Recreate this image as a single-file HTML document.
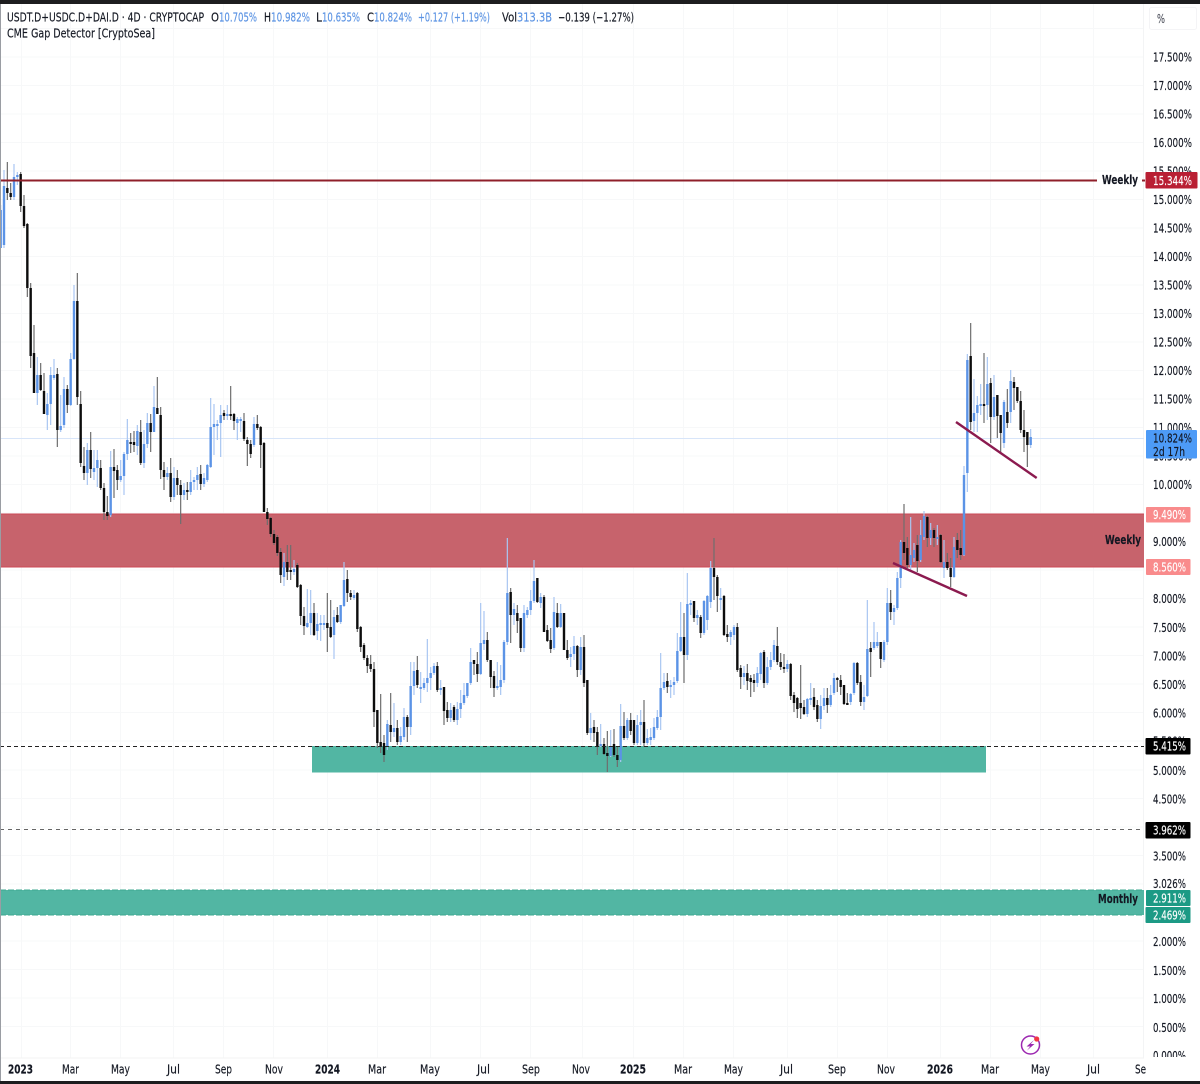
<!DOCTYPE html>
<html lang="en">
<head>
<meta charset="utf-8">
<title>USDT.D+USDC.D+DAI.D chart</title>
<style>
html,body{margin:0;padding:0;background:#fff;width:1200px;height:1084px;overflow:hidden}
svg{display:block;position:absolute;left:0;top:0;filter:blur(.3px)}
text{font-family:"DejaVu Sans","Liberation Sans",sans-serif;font-size:12px;fill:#131722;stroke:#131722;stroke-width:.15px}
.b{fill:#5b93e3;stroke:#5b93e3}
.w{fill:#fff;stroke:#fff}
.bold{font-weight:bold}
</style>
</head>
<body>
<svg id="c" width="1200" height="1084" viewBox="0 0 1200 1084" xmlns="http://www.w3.org/2000/svg">
<rect width="1200" height="1084" fill="#fff"/>
<g id="grid" stroke="#f7f8f9" stroke-width="1" fill="none">
<path d="M21.5 4V1058M70.5 4V1058M120.5 4V1058M173.5 4V1058M223.5 4V1058M273.5 4V1058M327.5 4V1058M377.5 4V1058M430.5 4V1058M480.5 4V1058M530.5 4V1058M582.5 4V1058M633.5 4V1058M683.5 4V1058M733.5 4V1058M787.5 4V1058M837.5 4V1058M887.5 4V1058M940.5 4V1058M990.5 4V1058M1040.5 4V1058M1093.5 4V1058"/>
<path d="M0 28.5H1144M0 57H1144M0 85.5H1144M0 114H1144M0 142.5H1144M0 171H1144M0 199.5H1144M0 228H1144M0 256.5H1144M0 285H1144M0 313.5H1144M0 342H1144M0 370.5H1144M0 399H1144M0 427.5H1144M0 456H1144M0 484.5H1144M0 513H1144M0 541.5H1144M0 570H1144M0 598.5H1144M0 627H1144M0 655.5H1144M0 684H1144M0 712.5H1144M0 741H1144M0 770H1144M0 798.5H1144M0 827H1144M0 855.5H1144M0 884H1144M0 912.5H1144M0 941H1144M0 969.5H1144M0 998H1144M0 1026.5H1144"/>
<path d="M0 1058H1144" stroke="#f3f3f3"/>
<path d="M1143.5 4V1058" stroke="#f3f4f5"/>
</g>
<!-- zones -->
<rect x="0" y="514" width="1144" height="53" fill="#c7636c"/>
<path d="M0 514H1144M0 567H1144" stroke="#cc4a56" stroke-width="1"/>
<rect x="312" y="746" width="674" height="26.500" fill="#52b6a3"/>
<rect x="0" y="890" width="1144" height="25" fill="#52b6a3"/>
<path d="M0 890H1144M0 915H1144" stroke="#3fa892" stroke-width="1" stroke-dasharray="6 2"/>
<!-- current price line -->
<path d="M0 438.500H1144" stroke="#d8e5f9" stroke-width="1"/>
<g id="candles"></g>
<!-- lines -->
<path d="M0 180.500H1097" stroke="#8f1f2a" stroke-width="2"/>
<path d="M1142 180.500H1145" stroke="#8f1f2a" stroke-width="2"/>
<path d="M0 746.500H1144" stroke="#222" stroke-width="1" stroke-dasharray="4 3"/>
<path d="M0 829.500H1144" stroke="#666" stroke-width="1" stroke-dasharray="4 4"/>
<path d="M956 422L1036.700 478" stroke="#8b1a4f" stroke-width="2.400"/>
<path d="M893 563L967 596" stroke="#8b1a4f" stroke-width="2.400"/>
<!-- legend -->
<text x="7" y="21.500" textLength="197" lengthAdjust="spacingAndGlyphs">USDT.D+USDC.D+DAI.D · 4D · CRYPTOCAP</text>
<text x="211" y="21.500" textLength="8" lengthAdjust="spacingAndGlyphs">O</text>
<text class="b" x="219" y="21.500" textLength="38" lengthAdjust="spacingAndGlyphs">10.705%</text>
<text x="264" y="21.500" textLength="7" lengthAdjust="spacingAndGlyphs">H</text>
<text class="b" x="271" y="21.500" textLength="39" lengthAdjust="spacingAndGlyphs">10.982%</text>
<text x="316" y="21.500" textLength="6" lengthAdjust="spacingAndGlyphs">L</text>
<text class="b" x="322" y="21.500" textLength="38" lengthAdjust="spacingAndGlyphs">10.635%</text>
<text x="367" y="21.500" textLength="7" lengthAdjust="spacingAndGlyphs">C</text>
<text class="b" x="374" y="21.500" textLength="38" lengthAdjust="spacingAndGlyphs">10.824%</text>
<text class="b" x="418" y="21.500" textLength="72" lengthAdjust="spacingAndGlyphs">+0.127 (+1.19%)</text>
<text x="502" y="21.500" textLength="15" lengthAdjust="spacingAndGlyphs">Vol</text>
<text class="b" x="517" y="21.500" textLength="35" lengthAdjust="spacingAndGlyphs">313.3B</text>
<text x="558" y="21.500" textLength="76" lengthAdjust="spacingAndGlyphs">−0.139 (−1.27%)</text>
<text x="7" y="37.500" textLength="148" lengthAdjust="spacingAndGlyphs">CME Gap Detector [CryptoSea]</text>
<!-- % box -->
<rect x="1149.500" y="7.500" width="47" height="22" rx="2" fill="#fff" stroke="#f4f4f6"/>
<text x="1157" y="23" style="fill:#50535e;stroke:#50535e" textLength="8" lengthAdjust="spacingAndGlyphs">%</text>
<!-- axis -->
<g>
<text x="1153" y="61.500" textLength="39" lengthAdjust="spacingAndGlyphs">17.500%</text>
<text x="1153" y="90" textLength="39" lengthAdjust="spacingAndGlyphs">17.000%</text>
<text x="1153" y="118.500" textLength="39" lengthAdjust="spacingAndGlyphs">16.500%</text>
<text x="1153" y="147" textLength="39" lengthAdjust="spacingAndGlyphs">16.000%</text>
<text x="1153" y="175.500" textLength="39" lengthAdjust="spacingAndGlyphs">15.500%</text>
<text x="1153" y="204" textLength="39" lengthAdjust="spacingAndGlyphs">15.000%</text>
<text x="1153" y="232.500" textLength="39" lengthAdjust="spacingAndGlyphs">14.500%</text>
<text x="1153" y="261" textLength="39" lengthAdjust="spacingAndGlyphs">14.000%</text>
<text x="1153" y="289.500" textLength="39" lengthAdjust="spacingAndGlyphs">13.500%</text>
<text x="1153" y="318" textLength="39" lengthAdjust="spacingAndGlyphs">13.000%</text>
<text x="1153" y="346.500" textLength="39" lengthAdjust="spacingAndGlyphs">12.500%</text>
<text x="1153" y="375" textLength="39" lengthAdjust="spacingAndGlyphs">12.000%</text>
<text x="1153" y="403.500" textLength="39" lengthAdjust="spacingAndGlyphs">11.500%</text>
<text x="1153" y="432" textLength="39" lengthAdjust="spacingAndGlyphs">11.000%</text>
<text x="1153" y="460.500" textLength="39" lengthAdjust="spacingAndGlyphs">10.500%</text>
<text x="1153" y="489" textLength="39" lengthAdjust="spacingAndGlyphs">10.000%</text>
<text x="1153" y="546" textLength="33" lengthAdjust="spacingAndGlyphs">9.000%</text>
<text x="1153" y="603" textLength="33" lengthAdjust="spacingAndGlyphs">8.000%</text>
<text x="1153" y="632" textLength="33" lengthAdjust="spacingAndGlyphs">7.500%</text>
<text x="1153" y="660.500" textLength="33" lengthAdjust="spacingAndGlyphs">7.000%</text>
<text x="1153" y="689" textLength="33" lengthAdjust="spacingAndGlyphs">6.500%</text>
<text x="1153" y="717.500" textLength="33" lengthAdjust="spacingAndGlyphs">6.000%</text>
<text x="1153" y="745.500" textLength="33" lengthAdjust="spacingAndGlyphs">5.500%</text>
<text x="1153" y="775" textLength="33" lengthAdjust="spacingAndGlyphs">5.000%</text>
<text x="1153" y="803.500" textLength="33" lengthAdjust="spacingAndGlyphs">4.500%</text>
<text x="1153" y="860.500" textLength="33" lengthAdjust="spacingAndGlyphs">3.500%</text>
<text x="1153" y="888" textLength="33" lengthAdjust="spacingAndGlyphs">3.026%</text>
<text x="1153" y="946" textLength="33" lengthAdjust="spacingAndGlyphs">2.000%</text>
<text x="1153" y="975" textLength="33" lengthAdjust="spacingAndGlyphs">1.500%</text>
<text x="1153" y="1003" textLength="33" lengthAdjust="spacingAndGlyphs">1.000%</text>
<text x="1153" y="1032" textLength="33" lengthAdjust="spacingAndGlyphs">0.500%</text>
<text x="1153" y="1060" textLength="33" lengthAdjust="spacingAndGlyphs">0.000%</text>
<rect x="1144" y="1057" width="56" height="8" fill="#fff"/>
</g>
<!-- price tags -->
<rect x="1145.500" y="172" width="52" height="16.500" rx="1" fill="#b91f33"/>
<text class="w" x="1153" y="185" textLength="39" lengthAdjust="spacingAndGlyphs">15.344%</text>
<rect x="1146" y="430" width="51" height="28.500" rx="1" fill="#4d9bf7"/>
<text x="1153" y="442.500" textLength="39" lengthAdjust="spacingAndGlyphs">10.824%</text>
<text x="1153" y="456" textLength="32" lengthAdjust="spacingAndGlyphs">2d 17h</text>
<rect x="1146" y="507" width="44.500" height="15.500" rx="1" fill="#f98b8c"/>
<text class="w" x="1153" y="519" textLength="33" lengthAdjust="spacingAndGlyphs">9.490%</text>
<rect x="1146" y="559" width="44.500" height="16" rx="1" fill="#f98b8c"/>
<text class="w" x="1153" y="571.500" textLength="33" lengthAdjust="spacingAndGlyphs">8.560%</text>
<rect x="1145.500" y="738" width="45" height="16.500" rx="1" fill="#000"/>
<text class="w" x="1153" y="750.500" textLength="33" lengthAdjust="spacingAndGlyphs">5.415%</text>
<rect x="1145.500" y="822" width="45" height="16.500" rx="1" fill="#000"/>
<text class="w" x="1153" y="834.500" textLength="33" lengthAdjust="spacingAndGlyphs">3.962%</text>
<rect x="1146" y="890" width="44.500" height="16" rx="1" fill="#1c9a85"/>
<text class="w" x="1153" y="902.500" textLength="33" lengthAdjust="spacingAndGlyphs">2.911%</text>
<rect x="1145.500" y="907" width="45" height="16" rx="1" fill="#1c9a85"/>
<text class="w" x="1153" y="919.500" textLength="33" lengthAdjust="spacingAndGlyphs">2.469%</text>
<!-- line labels -->
<text class="bold" x="1102" y="184" textLength="36" lengthAdjust="spacingAndGlyphs">Weekly</text>
<text class="bold" x="1105" y="544" textLength="36" lengthAdjust="spacingAndGlyphs">Weekly</text>
<text class="bold" x="1098" y="903" textLength="40" lengthAdjust="spacingAndGlyphs">Monthly</text>
<!-- time axis -->
<g>
<text class="bold" x="8" y="1073.500" textLength="25" lengthAdjust="spacingAndGlyphs">2023</text>
<text x="62" y="1073.500" textLength="17" lengthAdjust="spacingAndGlyphs">Mar</text>
<text x="111" y="1073.500" textLength="19" lengthAdjust="spacingAndGlyphs">May</text>
<text x="167" y="1073.500" textLength="13" lengthAdjust="spacingAndGlyphs">Jul</text>
<text x="215" y="1073.500" textLength="17" lengthAdjust="spacingAndGlyphs">Sep</text>
<text x="265" y="1073.500" textLength="18" lengthAdjust="spacingAndGlyphs">Nov</text>
<text class="bold" x="315" y="1073.500" textLength="25" lengthAdjust="spacingAndGlyphs">2024</text>
<text x="368" y="1073.500" textLength="18" lengthAdjust="spacingAndGlyphs">Mar</text>
<text x="420" y="1073.500" textLength="20" lengthAdjust="spacingAndGlyphs">May</text>
<text x="477" y="1073.500" textLength="13" lengthAdjust="spacingAndGlyphs">Jul</text>
<text x="522" y="1073.500" textLength="18" lengthAdjust="spacingAndGlyphs">Sep</text>
<text x="572" y="1073.500" textLength="18" lengthAdjust="spacingAndGlyphs">Nov</text>
<text class="bold" x="620" y="1073.500" textLength="26" lengthAdjust="spacingAndGlyphs">2025</text>
<text x="674" y="1073.500" textLength="18" lengthAdjust="spacingAndGlyphs">Mar</text>
<text x="724" y="1073.500" textLength="19" lengthAdjust="spacingAndGlyphs">May</text>
<text x="780" y="1073.500" textLength="13" lengthAdjust="spacingAndGlyphs">Jul</text>
<text x="828" y="1073.500" textLength="18" lengthAdjust="spacingAndGlyphs">Sep</text>
<text x="877" y="1073.500" textLength="18" lengthAdjust="spacingAndGlyphs">Nov</text>
<text class="bold" x="927" y="1073.500" textLength="26" lengthAdjust="spacingAndGlyphs">2026</text>
<text x="981" y="1073.500" textLength="18" lengthAdjust="spacingAndGlyphs">Mar</text>
<text x="1031" y="1073.500" textLength="19" lengthAdjust="spacingAndGlyphs">May</text>
<text x="1087" y="1073.500" textLength="13" lengthAdjust="spacingAndGlyphs">Jul</text>
<text x="1135" y="1073.500" textLength="11" lengthAdjust="spacingAndGlyphs">Se</text>
</g>
<!-- bolt icon -->
<circle cx="1030.500" cy="1045" r="9" fill="none" stroke="#9c27b0" stroke-width="1.500"/>
<path d="M1034 1040L1026.500 1046.500H1030.200L1027 1050.500L1034.500 1044H1030.800Z" fill="#9c27b0"/>
<circle cx="1036.700" cy="1039" r="2.600" fill="#f23645"/>
<!-- frame -->
<rect x="0" y="0" width="1200" height="4" fill="#1d1d1f"/>
<rect x="0" y="1081" width="1200" height="3" fill="#1d1d1f"/>
<rect x="0" y="4" width="1" height="1077" fill="#9a9da3"/>
</svg>
<script>
var d="b210,248,205,248 b186,245,170,248 k188,193,162,200 k193,197,183,200 b177,197,164,200 b175,177,172,185 k174,206,172,212 k206,226,195,228 k224,288,223,297 k288,356,283,368 k353,393,325,393 b375,393,357,405 k375,390,363,391 k391,414,373,414 b404,415,393,430 b375,404,367,425 b375,378,359,380 k374,430,368,447 b426,430,395,432 b389,425,377,428 k389,405,385,413 b359,405,353,406 b301,359,285,360 k301,397,273,405 k404,463,391,467 k466,473,447,480 b450,473,443,485 k450,469,432,478 b468,472,450,480 b460,468,450,487 k468,488,460,490 k488,512,483,520 k512,516,496,520 b467,515,451,517 k467,471,449,498 k470,480,465,490 b476,480,460,482 b454,476,452,495 b440,454,419,460 k442,444,433,453 k442,445,431,452 b431,446,425,455 k432,463,420,465 b444,463,430,468 b423,444,413,448 k423,432,414,452 b407,432,386,432 k408,414,377,414 k415,470,407,479 k470,477,462,490 b473,477,467,480 k473,497,458,502 b478,497,467,500 k478,485,470,495 k485,495,480,524 b490,495,483,500 k490,492,482,500 b482,492,470,495 b480,482,477,490 b475,480,467,490 k474,484,465,490 b478,484,473,487 b465,480,464,482 b427,467,398,468 b424,427,404,455 b424,425,420,440 b415,423,405,457 k413,416,410,420 b414,415,405,420 k414,415,386,420 k414,421,413,430 b419,423,417,440 b419,421,417,432 k421,439,413,441 k440,444,437,466 k444,454,440,458 b424,445,417,447 k424,428,415,430 k427,445,426,468 k443,512,442,512 k512,519,508,525 k518,534,517,537 k534,543,530,545 k537,553,535,556 k552,575,548,583 b562,577,553,586 k562,572,545,580 k570,572,545,580 b569,572,560,575 k565,587,563,588 k585,616,584,625 k616,626,607,635 b623,627,589,628 b613,623,590,635 k613,635,603,636 b624,631,613,640 b623,625,615,641 b623,624,615,630 k623,628,593,652 k627,637,600,638 b617,635,610,659 k615,622,607,623 b605,622,605,624 b580,606,562,607 k579,593,570,602 k593,597,590,600 b595,598,590,600 k593,629,592,632 k627,647,626,652 k645,658,643,660 k658,666,655,673 k664,669,655,672 k669,712,662,727 k710,743,710,748 k742,747,694,753 k743,755,735,762 b724,747,720,750 k725,732,693,742 b728,732,703,737 k728,742,720,745 b736,742,727,745 b717,737,708,740 k717,727,715,742 b686,727,662,735 b671,686,662,695 k670,685,656,688 b687,688,672,703 b683,688,678,690 b678,683,639,692 b673,678,667,690 b666,673,663,675 k666,690,662,692 b688,690,680,695 k687,711,687,725 k710,718,702,722 b710,718,703,722 k707,720,705,722 b709,720,702,725 b703,709,690,718 b695,703,683,705 b683,696,683,698 b662,683,648,685 k660,664,660,675 k664,674,652,682 b643,674,603,675 b640,644,611,650 k640,660,632,662 k660,677,660,688 k676,688,671,697 b686,688,662,690 b680,687,665,695 b642,680,640,683 b593,642,538,645 k592,615,588,643 b609,615,603,625 k613,621,605,633 k618,648,618,652 b613,648,605,652 b610,615,607,618 b601,610,590,615 b581,601,560,603 k578,602,578,603 b597,603,593,608 k597,632,595,632 k630,641,625,642 k640,649,628,653 b612,648,597,650 k613,627,603,628 b613,627,604,628 k613,650,613,650 k650,658,640,660 b654,657,647,667 b646,654,636,660 k646,670,645,677 b647,670,637,675 k647,683,635,687 k680,733,680,735 b728,733,713,740 k727,733,720,742 k732,747,727,755 b744,746,724,747 k744,754,738,755 k753,756,731,772 b746,756,730,757 k744,755,729,757 k755,760,747,767 b726,760,704,762 k726,738,712,740 b720,738,718,740 k720,731,713,735 k720,743,720,745 b725,743,715,745 b722,725,710,745 k722,743,700,747 b738,743,729,745 b737,740,728,745 b727,738,718,740 b717,728,710,730 b688,717,653,730 b682,688,673,690 k681,687,673,693 b685,687,680,698 b682,685,677,695 b651,681,633,683 b637,651,602,652 k637,655,613,683 b604,655,573,660 b603,604,600,615 k601,618,601,622 b615,618,610,625 k617,633,615,638 b601,633,600,635 b596,620,595,630 b568,602,561,608 k568,577,538,600 k577,596,575,612 b598,600,588,610 k596,635,595,636 k634,637,625,642 b632,637,630,645 b627,635,625,640 k627,670,623,672 k668,677,665,689 b673,677,666,685 k673,681,664,690 k678,682,675,697 k680,683,674,692 b673,683,667,687 b653,674,652,680 k652,683,650,688 b667,683,657,685 b660,667,652,670 b645,660,640,662 k646,662,627,665 k662,667,653,670 k667,669,654,673 b664,669,660,672 k664,696,663,700 k695,703,692,712 k698,709,697,718 k703,708,665,719 k707,714,700,715 b699,714,698,717 b698,699,683,705 k697,707,688,710 k705,719,700,722 b706,719,695,729 b698,706,688,710 k698,705,688,713 b695,705,685,707 b678,693,673,695 k678,680,677,692 k680,687,675,695 k685,704,685,705 k703,704,693,705 b694,702,693,705 b663,693,662,695 k663,683,662,685 k682,702,675,706 b697,702,685,710 b649,696,600,697 k648,652,642,677 b642,648,622,650 b642,646,632,648 k642,659,642,668 b642,660,640,662 b603,642,588,645 k603,612,590,620 b608,612,605,625 b578,608,572,610 b542,578,540,588 k542,553,504,560 k548,565,537,568 b555,565,517,570 b550,558,543,562 k545,561,535,572 b535,560,520,562 b516,537,511,540 k517,538,516,547 b530,538,523,545 k530,538,528,547 b537,538,525,545 k535,562,534,563 b562,568,540,578 k562,568,553,570 k568,577,558,587 b547,577,537,578 k540,550,533,558 k548,555,530,560 b475,555,466,556 b360,473,354,492 k356,422,323,430 b413,421,379,432 b405,413,396,432 b404,406,384,415 k404,406,353,423 b384,405,357,420 k383,417,378,443 b397,417,375,420 k395,416,395,438 k415,433,415,452 b402,443,400,448 k412,423,389,428 b381,412,370,423 k382,388,377,410 k387,401,387,403 k401,430,391,433 k430,437,410,452 k432,445,432,467 b437,445,429,448".split(" ");
var p={bw:"",bb:"",kw:"",kb:""};
d.forEach(function(s,k){
 var c=s[0],v=s.slice(1).split(",").map(Number),x=(0.67+k*10/3).toFixed(2);
 p[c+"w"]+="M"+x+" "+v[2]+"V"+v[3];
 p[c+"b"]+="M"+x+" "+v[0]+"V"+Math.max(v[1],v[0]+2);
});
document.getElementById("candles").innerHTML=
 '<path d="'+p.bw+'" stroke="#a9c6f2" stroke-width="1.2" fill="none"/>'+
 '<path d="'+p.kw+'" stroke="#6e6e6e" stroke-width="1.2" fill="none"/>'+
 '<path d="'+p.bb+'" stroke="#5b93e6" stroke-width="2.4" fill="none"/>'+
 '<path d="'+p.kb+'" stroke="#0c0c0c" stroke-width="2.4" fill="none"/>';
</script>
</body>
</html>
